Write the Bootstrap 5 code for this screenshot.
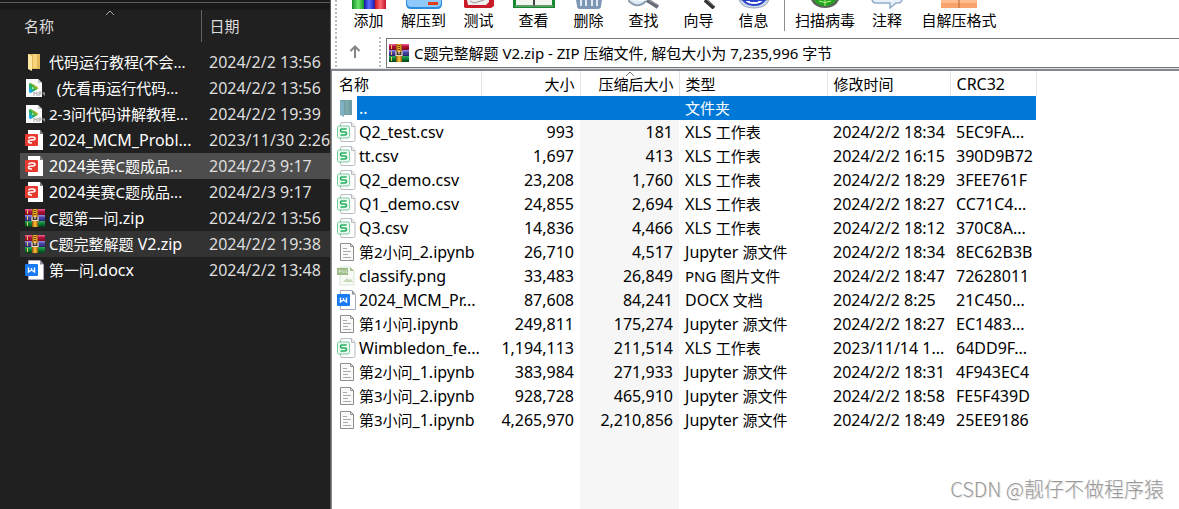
<!DOCTYPE html>
<html lang="zh-CN">
<head>
<meta charset="utf-8">
<meta name="viewport" content="width=device-width, initial-scale=1">
<title>C题完整解题 V2.zip</title>
<link href="https://cdn.jsdelivr.net/npm/bootstrap@5.3.0/dist/css/bootstrap.min.css" rel="stylesheet">
<style>
body{font:15px/24px "Noto Sans","Noto Sans CJK SC",sans-serif;color:#000;background:#fff;overflow:hidden}
.latin{font-size:16px}
.explorer{flex:0 0 331px;background:#202020;color:#fff;border-right:1px solid #5a5a5a}
.explorer-top{height:10px;background:#191919;padding-top:2px}
.explorer-top hr{border-top:1px solid #5c5c5c;opacity:1}
.files{table-layout:fixed;width:100%;border-collapse:collapse;white-space:nowrap}
.files td,.files th{padding:0;font-weight:400;overflow:hidden}
.files svg{display:block}
.explorer .files{margin-left:20px;width:calc(100% - 20px)}
.explorer th{height:32px;color:#dedede;position:relative}
.explorer thead th:first-child{padding-left:4px;border-right:1px solid #636363}
.explorer td{height:26px}
.explorer td:first-child{padding-left:5px}
.explorer td:nth-child(2){padding-left:3px}
.explorer td:last-child,.explorer th:last-child{padding-left:8px;color:#dedede}
.gap-row td{height:7px!important}
.hot{background:#4d4d4d}
.open-row{background:#333}
.sort-mark{position:absolute;top:0;left:50%;margin-left:-5px}
.toolbar{height:37px;padding-left:4px}
.grip{width:2px;background:repeating-linear-gradient(#bbb 0 2px,#fff 2px 4px)}
.tool{border:0;background:none;padding:0;width:55px;color:#000;line-height:22px;white-space:nowrap}
.tool svg{display:block;margin:0 auto}
.tool-lg{width:74px}.tool-sm{width:50px}.tool-xl{width:94px}
.tool-sep{width:1px;height:31px;background:#8d8d8d;margin:0 3px}
.pathrow{height:32px;padding-left:4px;border-bottom:1px solid #ddd}
.up{border:0;background:none;padding:0 6px 0 0;width:42px;height:26px}
.pathbox{height:30px;border:1px solid #777;border-right:0;margin-left:5px;padding-left:2px;gap:5px;margin-top:1px}
.pathbox input{border:0;padding:0;outline:0;background:none;color:#000}
.listing{border-top:2px solid #828790;border-left:1px solid #828790;background:linear-gradient(#f6f6f6,#f6f6f6) 248px 0/99px 100% no-repeat}
.archive{width:704px}
.archive th{height:25px;background:#fff;border-right:1px solid #e2e2e2;padding:0 6px;position:relative}
.archive th:first-child{padding-left:7px}
.archive th.text-end{padding-right:5px}
.archive td{height:24px;padding:0 6px}
.archive td:first-child{padding:0 0 0 5px}
.archive td:nth-child(2){padding:0 0 0 2px}
.archive .chosen td:not(:first-child){background:#0078d7;color:#fff}
.mark-author{position:absolute;right:15px;bottom:6px;font-size:20px;line-height:28px;color:#999;text-shadow:1px 1px 1px #ddd;font-family:"Noto Sans CJK SC",sans-serif;font-weight:300}
</style>
<script src="https://cdn.jsdelivr.net/npm/bootstrap@5.3.0/dist/js/bootstrap.bundle.min.js"></script>
</head>
<body>
<svg width="0" height="0" class="position-absolute" aria-hidden="true">
<defs>
<linearGradient id="play" x1="0" x2="1" y1="1" y2="0"><stop stop-color="#22a9f0"/><stop offset=".45" stop-color="#22b24c"/><stop offset="1" stop-color="#f6b51d"/></linearGradient>
<linearGradient id="rgb"><stop stop-color="#168b28"/><stop offset=".18" stop-color="#6fe76f"/><stop offset=".35" stop-color="#149a28"/><stop offset=".36" stop-color="#171ca5"/><stop offset=".5" stop-color="#5a72ff"/><stop offset=".66" stop-color="#2020b8"/><stop offset=".67" stop-color="#c11"/><stop offset=".83" stop-color="#ff6b74"/><stop offset="1" stop-color="#c0142a"/></linearGradient>
<linearGradient id="r1" x2="0" y2="1"><stop stop-color="#f06aa0"/><stop offset=".4" stop-color="#b5123c"/><stop offset="1" stop-color="#7c0b23"/></linearGradient>
<linearGradient id="r2" x2="0" y2="1"><stop stop-color="#9d95e8"/><stop offset=".4" stop-color="#4b46a8"/><stop offset="1" stop-color="#29246c"/></linearGradient>
<linearGradient id="r3" x2="0" y2="1"><stop stop-color="#35a861"/><stop offset=".5" stop-color="#087a30"/><stop offset="1" stop-color="#033f18"/></linearGradient>
<linearGradient id="gold" x2="1"><stop stop-color="#8a4b0c"/><stop offset=".5" stop-color="#ffc83a"/><stop offset="1" stop-color="#9c570f"/></linearGradient>
<symbol id="folder" viewBox="0 0 20 20"><path d="M3 2h12v15H3z" fill="#e3b957"/><path d="M8 2h4v14H8z" fill="#f5d47c"/><path d="M3 2l4 2v15l-4-2z" fill="#ffe7a1"/></symbol>
<symbol id="folder-sel" viewBox="0 0 20 20"><path d="M3 2h12v15H3z" fill="#6f9ea8"/><path d="M8 2h4v14H8z" fill="#7da9a9"/><path d="M3 2l4 2v15l-4-2z" fill="#7fb3c4"/></symbol>
<symbol id="video" viewBox="0 0 20 20"><path d="M1 1h12l4 4v14H1z" fill="#fafafa"/><path d="M13 1v4h4z" fill="#c9cbd3"/><path d="M5.500 6.500v7l6-3.500z" fill="none" stroke="url(#play)" stroke-width="3" stroke-linejoin="round"/><path d="M9 18v-4l1.500 2 1.500-2v4M14 18v-4h2v2h-2M18 14v2h2M20 14v4" fill="none" stroke="#aaa"/></symbol>
<symbol id="pdf" viewBox="0 0 20 20"><path d="M3 0h12l3 4v16H3z" fill="#fff"/><path d="M15 0v4h3z" fill="#737982"/><rect x="0" y="4" width="13" height="12" rx="1" fill="#e8392f"/><path d="M3.500 8.500Q4 7 6 7h1.500Q10 7 10 8.500T7.500 10H6Q3.500 10 3.500 11.500T6 13h1" fill="none" stroke="#fff" stroke-width="1.500"/></symbol>
<symbol id="rar" viewBox="0 0 20 20"><path d="M0 1h20v6H0z" fill="url(#r1)"/><path d="M0 7h20v6H0z" fill="url(#r2)"/><path d="M0 13h20v6H0z" fill="url(#r3)"/><path d="M2.500 2v4M2.500 8v4M2.500 14v4" stroke="#e7c559"/><path d="M7 1h6v18H7z" fill="url(#gold)"/><path d="M10 2v6" stroke="#7a3d06" stroke-width="2" stroke-dasharray="1 1"/><path d="M7 9h6v4H7z" fill="#4e3424"/><path d="M7 8.500v4h6v-4M10 8v3" fill="none" stroke="#e5dccb" stroke-width="1.200"/></symbol>
<symbol id="word" viewBox="0 0 20 20"><path d="M3.500.5H15l3.500 4V19.500h-15z" fill="#fff" stroke="#aab"/><path d="M15 0v4.500h3.500z" fill="#8c929b"/><rect x="0" y="4" width="13" height="12" rx="1" fill="#197bf3"/><path d="M3.500 7.500v4.500l3-2 3 2V7.500M6.500 8v2" fill="none" stroke="#fff" stroke-width="1.400"/></symbol>
<symbol id="sheet" viewBox="0 0 20 20"><path d="M3.500 4V2q0-1.500 1.500-1.500h9.500l3.500 4V18q0 1.500-1.500 1.500H5q-1.500 0-1.500-1.500v-2" fill="#fff" stroke="#b6bac4"/><path d="M14.500.5V4.500h3.500" fill="#eee" stroke="#b6bac4"/><rect x=".5" y="4" width="12" height="12" rx="1.500" fill="#eefaf3" stroke="#72d199"/><path d="M9.500 7H5Q3.500 7 3.500 8.500T5 10h3Q9.500 10 9.500 11.500T8 13H3.500" fill="none" stroke="#20ae5e" stroke-width="1.600"/></symbol>
<symbol id="text" viewBox="0 0 20 20"><path d="M3.500 1.500h10l3 3v14h-13z" fill="#fafafa" stroke="#8c8c8c"/><path d="M13.500 1.500v3h3" fill="none" stroke="#8c8c8c"/><path d="M6 6.500h4M6 9.500h8M6 12.500h5M6 15.500h8" stroke="#aaa"/></symbol>
<symbol id="png" viewBox="0 0 20 20"><path d="M3 1h10l4 4v14H3z" fill="#f7faf5" stroke="#dbe7d5"/><path d="M13 1v4h4z" fill="#a4c38e"/><path d="M0 2h11v7H0z" fill="#9dbb86"/><path d="M2 7V4h1.500v1.500H2M5 7V4l2 3V4M10 4H9v3h1V5.500" fill="none" stroke="#dbe8d1" stroke-width=".7"/><path d="M6 16l4-4 2 2 2-1 2 3z" fill="#c6d9b9"/></symbol>
</defs></svg>

<div class="d-flex vh-100 position-relative">
<aside class="explorer">
  <div class="explorer-top"><hr class="m-0"></div>
  <table class="files">
    <colgroup><col style="width:26px"><col style="width:155px"><col></colgroup>
    <thead><tr><th colspan="2">名称<svg class="sort-mark" width="10" height="6"><path d="M1 5l4-4 4 4" fill="none" stroke="#aaa"/></svg></th><th>日期</th></tr></thead>
    <tbody>
    <tr class="gap-row"><td colspan="3"></td></tr>
    <tr><td><svg width="20" height="20"><use href="#folder"/></svg></td><td>代码运行教程(不会...</td><td class="latin">2024/2/2 13:56</td></tr>
    <tr><td><svg width="20" height="20"><use href="#video"/></svg></td><td>&nbsp; (先看再运行代码...</td><td class="latin">2024/2/2 13:56</td></tr>
    <tr><td><svg width="20" height="20"><use href="#video"/></svg></td><td>2-3问代码讲解教程...</td><td class="latin">2024/2/2 19:39</td></tr>
    <tr><td><svg width="20" height="20"><use href="#pdf"/></svg></td><td class="latin">2024_MCM_Probl...</td><td class="latin">2023/11/30 2:26</td></tr>
    <tr class="hot"><td><svg width="20" height="20"><use href="#pdf"/></svg></td><td><span class="latin">2024</span>美赛C题成品...</td><td class="latin">2024/2/3 9:17</td></tr>
    <tr><td><svg width="20" height="20"><use href="#pdf"/></svg></td><td><span class="latin">2024</span>美赛C题成品...</td><td class="latin">2024/2/3 9:17</td></tr>
    <tr><td><svg width="20" height="20"><use href="#rar"/></svg></td><td>C题第一问<span class="latin">.zip</span></td><td class="latin">2024/2/2 13:56</td></tr>
    <tr class="open-row"><td><svg width="20" height="20"><use href="#rar"/></svg></td><td>C题完整解题<span class="latin"> V2.zip</span></td><td class="latin">2024/2/2 19:38</td></tr>
    <tr><td><svg width="20" height="20"><use href="#word"/></svg></td><td>第一问<span class="latin">.docx</span></td><td class="latin">2024/2/2 13:48</td></tr>
    </tbody>
  </table>
</aside>

<main class="d-flex flex-column flex-grow-1 overflow-hidden">
  <div class="toolbar d-flex align-items-start flex-shrink-0">
    <div class="grip h-100 me-1"></div>
    <button class="tool"><svg width="34" height="9"><path d="M0 0h34v9H0z" fill="url(#rgb)"/></svg>添加</button>
    <button class="tool"><svg width="36" height="9"><path d="M0 0h36v4q0 5-5 5H5Q0 9 0 4z" fill="#2f8be0"/><path d="M1 0h34v3q0 4-5 4H6Q1 7 1 3z" fill="#8fc9fb"/><path d="M22 2h10v3H22z" fill="#e23c1c"/></svg>解压到</button>
    <button class="tool"><svg width="30" height="9"><path d="M0 0h30v6l-3 2H1L0 7z" fill="#c91a27"/><path d="M3 0h22v2l-3 3H4z" fill="#eee"/><path d="M6 1l4 2 10-3" fill="none" stroke="#999"/></svg>测试</button>
    <button class="tool"><svg width="42" height="9"><path d="M0 0h42v8H0z" fill="#158a2c"/><path d="M3 0h17v5H3zM22 0h17v5H22z" fill="#f5f5ef"/><path d="M21 0v7" stroke="#444" stroke-width="2"/><path d="M2 6h38" stroke="#aaa"/></svg>查看</button>
    <button class="tool"><svg width="26" height="9"><path d="M0 0h26l-1 6q0 3-3 3H4Q1 9 1 6z" fill="#7f97b5"/><path d="M5 0v6M10 0v6M16 0v6M21 0v6" stroke="#e1ebf5" stroke-width="2"/></svg>删除</button>
    <button class="tool"><svg width="32" height="9"><path d="M0 0q9 10 18 1" fill="#dcebf5" stroke="#8da0b2" stroke-width="2"/><path d="M19 0l11 7" stroke="#666d77" stroke-width="4"/><path d="M21 0l9 5" stroke="#aab" /></svg>查找</button>
    <button class="tool"><svg width="32" height="9"><path d="M22 0l9 8" stroke="#333" stroke-width="4"/><path d="M24 0l7 6" stroke="#888"/></svg>向导</button>
    <button class="tool"><svg width="30" height="9"><path d="M0 0q3 8 15 8T30 0z" fill="#cbd6e7" stroke="#9aa9bf"/><path d="M4 0q4 5 11 5T26 0z" fill="#fff" stroke="#2740c9" stroke-width="2"/><path d="M11 1h8" stroke="#2740c9" stroke-width="2"/></svg>信息</button>
    <div class="tool-sep"></div>
    <button class="tool tool-lg"><svg width="28" height="9"><path d="M0 0q4 8 14 8T28 0z" fill="#596359"/><path d="M3 0q4 6 11 6T25 0z" fill="#22a51e"/><path d="M14 0v6M8 1q6 3 12 0" fill="none" stroke="#b7f38c"/></svg>扫描病毒</button>
    <button class="tool tool-sm"><svg width="32" height="9"><path d="M1 0q1 3 4 3h14v5l6-5h2q3 0 4-3" fill="#e8f2fb" stroke="#93adc9" stroke-width="1.500"/></svg>注释</button>
    <button class="tool tool-xl"><svg width="36" height="9"><path d="M0 0h36v8H0z" fill="#f8a36c"/><path d="M0 0h36v3H0z" fill="#ffbd90"/><path d="M18 0v8" stroke="#b96535"/></svg>自解压格式</button>
  </div>
  <div class="pathrow d-flex flex-shrink-0">
    <div class="grip"></div>
    <button class="up" aria-label="向上"><svg width="12" height="14"><path d="M6 13V2M1.500 6L6 1.500 10.500 6" fill="none" stroke="#858585" stroke-width="2"/></svg></button>
    <div class="grip"></div>
    <div class="pathbox d-flex align-items-center flex-grow-1"><svg class="flex-shrink-0" width="20" height="20"><use href="#rar"/></svg><input class="flex-grow-1" type="text" aria-label="路径" value="C题完整解题 V2.zip - ZIP 压缩文件, 解包大小为 7,235,996 字节"></div>
  </div>
  <div class="listing flex-grow-1">
  <table class="files archive">
    <colgroup><col style="width:25px"><col style="width:124px"><col style="width:99px"><col style="width:99px"><col style="width:148px"><col style="width:123px"><col style="width:86px"></colgroup>
    <thead><tr><th colspan="2">名称</th><th class="text-end">大小</th><th class="text-end">压缩后大小<svg class="sort-mark" width="10" height="6"><path d="M1 5l4-4 4 4" fill="none" stroke="#777"/></svg></th><th>类型</th><th>修改时间</th><th class="latin">CRC32</th></tr></thead>
    <tbody>
    <tr class="chosen"><td><svg width="20" height="20"><use href="#folder-sel"/></svg></td><td class="latin">..</td><td></td><td></td><td>文件夹</td><td></td><td></td></tr>
    <tr><td><svg width="20" height="20"><use href="#sheet"/></svg></td><td class="latin">Q2_test.csv</td><td class="latin text-end">993</td><td class="latin text-end">181</td><td><span class="latin">XLS </span>工作表</td><td class="latin">2024/2/2 18:34</td><td class="latin">5EC9FA...</td></tr>
    <tr><td><svg width="20" height="20"><use href="#sheet"/></svg></td><td class="latin">tt.csv</td><td class="latin text-end">1,697</td><td class="latin text-end">413</td><td><span class="latin">XLS </span>工作表</td><td class="latin">2024/2/2 16:15</td><td class="latin">390D9B72</td></tr>
    <tr><td><svg width="20" height="20"><use href="#sheet"/></svg></td><td class="latin">Q2_demo.csv</td><td class="latin text-end">23,208</td><td class="latin text-end">1,760</td><td><span class="latin">XLS </span>工作表</td><td class="latin">2024/2/2 18:29</td><td class="latin">3FEE761F</td></tr>
    <tr><td><svg width="20" height="20"><use href="#sheet"/></svg></td><td class="latin">Q1_demo.csv</td><td class="latin text-end">24,855</td><td class="latin text-end">2,694</td><td><span class="latin">XLS </span>工作表</td><td class="latin">2024/2/2 18:27</td><td class="latin">CC71C4...</td></tr>
    <tr><td><svg width="20" height="20"><use href="#sheet"/></svg></td><td class="latin">Q3.csv</td><td class="latin text-end">14,836</td><td class="latin text-end">4,466</td><td><span class="latin">XLS </span>工作表</td><td class="latin">2024/2/2 18:12</td><td class="latin">370C8A...</td></tr>
    <tr><td><svg width="20" height="20"><use href="#text"/></svg></td><td>第2小问<span class="latin">_2.ipynb</span></td><td class="latin text-end">26,710</td><td class="latin text-end">4,517</td><td><span class="latin">Jupyter </span>源文件</td><td class="latin">2024/2/2 18:34</td><td class="latin">8EC62B3B</td></tr>
    <tr><td><svg width="20" height="20"><use href="#png"/></svg></td><td class="latin">classify.png</td><td class="latin text-end">33,483</td><td class="latin text-end">26,849</td><td>PNG 图片文件</td><td class="latin">2024/2/2 18:47</td><td class="latin">72628011</td></tr>
    <tr><td><svg width="20" height="20"><use href="#word"/></svg></td><td class="latin">2024_MCM_Pr...</td><td class="latin text-end">87,608</td><td class="latin text-end">84,241</td><td><span class="latin">DOCX </span>文档</td><td class="latin">2024/2/2 8:25</td><td class="latin">21C450...</td></tr>
    <tr><td><svg width="20" height="20"><use href="#text"/></svg></td><td>第1小问<span class="latin">.ipynb</span></td><td class="latin text-end">249,811</td><td class="latin text-end">175,274</td><td><span class="latin">Jupyter </span>源文件</td><td class="latin">2024/2/2 18:27</td><td class="latin">EC1483...</td></tr>
    <tr><td><svg width="20" height="20"><use href="#sheet"/></svg></td><td class="latin">Wimbledon_fe...</td><td class="latin text-end">1,194,113</td><td class="latin text-end">211,514</td><td><span class="latin">XLS </span>工作表</td><td class="latin">2023/11/14 1...</td><td class="latin">64DD9F...</td></tr>
    <tr><td><svg width="20" height="20"><use href="#text"/></svg></td><td>第2小问<span class="latin">_1.ipynb</span></td><td class="latin text-end">383,984</td><td class="latin text-end">271,933</td><td><span class="latin">Jupyter </span>源文件</td><td class="latin">2024/2/2 18:31</td><td class="latin">4F943EC4</td></tr>
    <tr><td><svg width="20" height="20"><use href="#text"/></svg></td><td>第3小问<span class="latin">_2.ipynb</span></td><td class="latin text-end">928,728</td><td class="latin text-end">465,910</td><td><span class="latin">Jupyter </span>源文件</td><td class="latin">2024/2/2 18:58</td><td class="latin">FE5F439D</td></tr>
    <tr><td><svg width="20" height="20"><use href="#text"/></svg></td><td>第3小问<span class="latin">_1.ipynb</span></td><td class="latin text-end">4,265,970</td><td class="latin text-end">2,210,856</td><td><span class="latin">Jupyter </span>源文件</td><td class="latin">2024/2/2 18:49</td><td class="latin">25EE9186</td></tr>
    </tbody>
  </table>
  </div>
</main>
<div class="mark-author">CSDN @靓仔不做程序猿</div>
</div>
</body>
</html>
